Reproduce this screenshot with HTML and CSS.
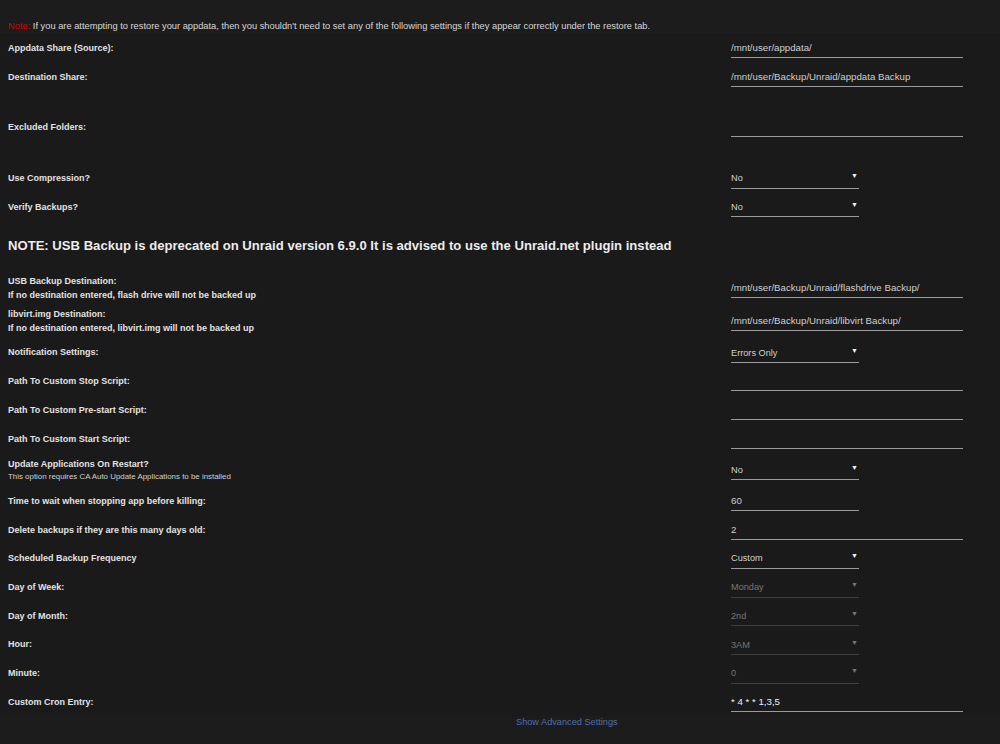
FILE: index.html
```html
<!DOCTYPE html>
<html lang="en">
<head>
  <meta charset="UTF-8" />
  <meta name="viewport" content="width=device-width, initial-scale=1.0"/>
  <title>Appdata Backup Settings</title>
  <link rel="stylesheet" href="styles.css">
</head>
<body>
  <div class="note"><span class="red">Note:</span> If you are attempting to restore your appdata, then you shouldn't need to set any of the following settings if they appear correctly under the restore tab.</div>

  <div class="panel">
    <div class="row">
      <div class="label">Appdata Share (Source):</div>
      <input class="text" type="text" value="/mnt/user/appdata/">
    </div>
    <div class="row">
      <div class="label">Destination Share:</div>
      <input class="text" type="text" value="/mnt/user/Backup/Unraid/appdata Backup">
    </div>
    <div class="row tall">
      <div class="label">Excluded Folders:</div>
      <input class="text" type="text" value="">
    </div>
    <div class="row">
      <div class="label">Use Compression?</div>
      <div class="select"><select><option>No</option><option>Yes</option></select></div>
    </div>
    <div class="row">
      <div class="label">Verify Backups?</div>
      <div class="select"><select><option>No</option><option>Yes</option></select></div>
    </div>

    <h3>NOTE: USB Backup is deprecated on Unraid version 6.9.0 It is advised to use the Unraid.net plugin instead</h3>

    <div class="row double">
      <div class="label">USB Backup Destination:<br>If no destination entered, flash drive will not be backed up</div>
      <input class="text" type="text" value="/mnt/user/Backup/Unraid/flashdrive Backup/">
    </div>
    <div class="row double">
      <div class="label">libvirt.img Destination:<br>If no destination entered, libvirt.img will not be backed up</div>
      <input class="text" type="text" value="/mnt/user/Backup/Unraid/libvirt Backup/">
    </div>
    <div class="row">
      <div class="label">Notification Settings:</div>
      <div class="select"><select><option>Errors Only</option><option>All</option><option>None</option></select></div>
    </div>
    <div class="row">
      <div class="label">Path To Custom Stop Script:</div>
      <input class="text" type="text" value="">
    </div>
    <div class="row">
      <div class="label">Path To Custom Pre-start Script:</div>
      <input class="text" type="text" value="">
    </div>
    <div class="row">
      <div class="label">Path To Custom Start Script:</div>
      <input class="text" type="text" value="">
    </div>
    <div class="row double">
      <div class="label">Update Applications On Restart?<small>This option requires CA Auto Update Applications to be installed</small></div>
      <div class="select"><select><option>No</option><option>Yes</option></select></div>
    </div>
    <div class="row">
      <div class="label">Time to wait when stopping app before killing:</div>
      <input class="text short" type="text" value="60">
    </div>
    <div class="row">
      <div class="label">Delete backups if they are this many days old:</div>
      <input class="text" type="text" value="2">
    </div>
    <div class="row">
      <div class="label">Scheduled Backup Frequency</div>
      <div class="select"><select class="bright"><option>Custom</option><option>Daily</option><option>Weekly</option></select></div>
    </div>
    <div class="row">
      <div class="label">Day of Week:</div>
      <div class="select off"><select disabled><option>Monday</option></select></div>
    </div>
    <div class="row">
      <div class="label">Day of Month:</div>
      <div class="select off"><select disabled><option>2nd</option></select></div>
    </div>
    <div class="row">
      <div class="label">Hour:</div>
      <div class="select off"><select disabled><option>3AM</option></select></div>
    </div>
    <div class="row">
      <div class="label">Minute:</div>
      <div class="select off"><select disabled><option>0</option></select></div>
    </div>
    <div class="row">
      <div class="label">Custom Cron Entry:</div>
      <input class="text bright" type="text" value="* 4 * * 1,3,5">
    </div>
  </div>

  <div class="advanced"><a href="#">Show Advanced Settings</a></div>
</body>
</html>
```

FILE: styles.css
```css
:root {
  --background: #1c1c1c;
  --panel: #1a1a1a;
  --text: #e2e2e2;
  --field: #cfcfcf;
  --line: #9a9a9a;
  --muted: #767676;
}

* {
  box-sizing: border-box;
  font-family: "Liberation Sans", Arial, sans-serif;
}

body {
  margin: 0;
  background: var(--background);
  color: var(--text);
}

.note {
  height: 34px;
  padding: 20px 8px 0;
  font-size: 9.3px;
  line-height: 12px;
  color: #d8d8d8;
}

.red {
  color: #d40000;
}

.panel {
  background: var(--panel);
}

.row {
  display: grid;
  grid-template-columns: 723px auto;
  align-items: center;
  height: 28.7px;
  padding-left: 8px;
}

.row.tall {
  height: 72.2px;
}

.row.double {
  height: 33.6px;
}

.label {
  font-size: 9px;
  font-weight: bold;
  line-height: 14px;
  color: var(--text);
}

.label small {
  display: block;
  margin-top: -1px;
  font-size: 7.9px;
  font-weight: normal;
  line-height: 13px;
  color: #d0d0d0;
}

.text {
  width: 232px;
  height: 20px;
  padding: 0;
  margin: 0;
  border: none;
  border-bottom: 1px solid var(--line);
  background: transparent;
  color: var(--field);
  font-size: 9.7px;
  outline: none;
}

.text.short {
  width: 128px;
}

.bright {
  color: #f0f0f0;
}

.select {
  position: relative;
  width: 128px;
}

.select select {
  width: 100%;
  height: 20px;
  padding: 0;
  margin: 0;
  border: none;
  border-bottom: 1px solid var(--line);
  background: transparent;
  color: var(--field);
  font-size: 9.2px;
  -webkit-appearance: none;
  appearance: none;
  outline: none;
}

.select::after {
  content: "\25BC";
  position: absolute;
  right: 1px;
  top: 5px;
  font-size: 7px;
  color: #f2f2f2;
  pointer-events: none;
}

.select.off select {
  color: var(--muted);
  border-bottom-color: #3e3e3e;
  opacity: 1;
}

.select.off::after {
  color: var(--muted);
}

h3 {
  margin: 0;
  height: 50px;
  padding-left: 8px;
  font-size: 13.1px;
  line-height: 50px;
  font-weight: bold;
  color: #ececec;
}

.advanced {
  padding-left: 516px;
  font-size: 9.2px;
  line-height: 12px;
}

.advanced a {
  color: #4d6fae;
  text-decoration: none;
}
```
